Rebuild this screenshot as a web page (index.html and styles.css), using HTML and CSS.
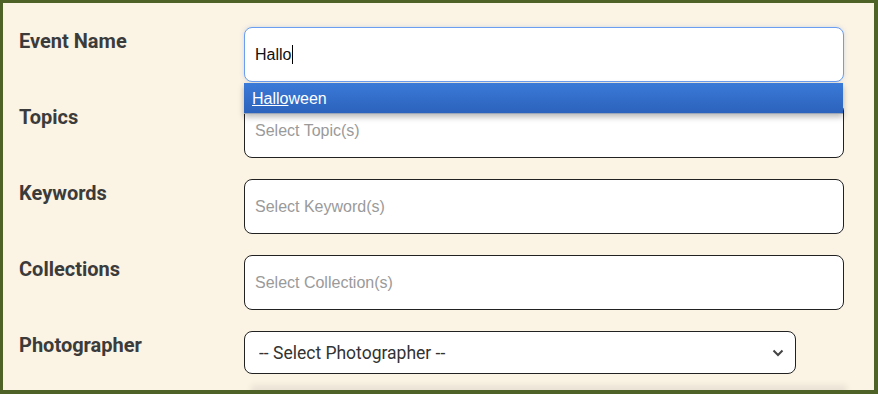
FILE: index.html
```html
<!DOCTYPE html>
<html lang="en">
<head>
    <meta charset="UTF-8">
    <meta name="viewport" content="width=device-width, initial-scale=1.0">
    <title>Event Details</title>
    <link rel="stylesheet" href="styles.css">
</head>
<body>
    <div class="frame">
        <form class="formulario" action="#">
            <div class="linha">
                <label class="rotulo">Event Name</label>
                <div class="campo">
                    <div class="entrada foco">Hallo<span class="cursor"></span></div>
                    <ul class="sugestoes">
                        <li class="ativa"><u>Hallo</u>ween</li>
                    </ul>
                </div>
            </div>
            <div class="linha">
                <label class="rotulo">Topics</label>
                <div class="campo">
                    <input type="text" class="entrada" placeholder="Select Topic(s)">
                </div>
            </div>
            <div class="linha">
                <label class="rotulo">Keywords</label>
                <div class="campo">
                    <input type="text" class="entrada" placeholder="Select Keyword(s)">
                </div>
            </div>
            <div class="linha">
                <label class="rotulo">Collections</label>
                <div class="campo">
                    <input type="text" class="entrada" placeholder="Select Collection(s)">
                </div>
            </div>
            <div class="linha">
                <label class="rotulo">Photographer</label>
                <div class="campo">
                    <div class="selecao">
                        <select>
                            <option>-- Select Photographer --</option>
                        </select>
                        <svg class="seta" width="12" height="8" viewBox="0 0 12 8">
                            <path d="M1.5 1.5 L6 6 L10.5 1.5" fill="none" stroke="#444" stroke-width="2"/>
                        </svg>
                    </div>
                </div>
            </div>
            <div class="proximo"></div>
        </form>
    </div>
</body>
</html>
```

FILE: styles.css
```css
* {
    padding: 0;
    margin: 0;
    box-sizing: border-box;
}

body {
    background: #4e6126;
}

/* Moldura */
.frame {
    width: 878px;
    height: 394px;
    background: #fbf3e4;
    border: solid #4e6126;
    border-width: 3px 4px 4px 3px;
    overflow: hidden;
}

.formulario {
    padding: 24px 30px 0 16px;
    display: flex;
    flex-direction: column;
    gap: 21px;
}

.linha {
    display: flex;
}

.rotulo {
    width: 225px;
    flex: none;
    padding-top: 2px;
    font-family: Roboto, 'Liberation Sans', Arial, sans-serif;
    font-weight: bold;
    font-size: 20px;
    line-height: 24px;
    color: #3b3b3b;
}

.campo {
    position: relative;
    flex: 1;
}

/* Campos de texto */
.entrada {
    display: flex;
    align-items: center;
    width: 600px;
    height: 55px;
    padding: 0 10px;
    font-family: 'Liberation Sans', Arial, sans-serif;
    font-size: 16px;
    color: #111;
    background: #fff;
    border: 1px solid #222;
    border-radius: 8px;
    outline: none;
}

.entrada::placeholder {
    color: #9a9a9a;
}

.foco {
    border-color: #6b9df0;
    box-shadow: 0 0 4px rgba(120, 160, 230, .35);
}

.cursor {
    display: inline-block;
    width: 1px;
    height: 19px;
    margin-left: 1px;
    background: #000;
}

/* Sugestoes */
.sugestoes {
    position: absolute;
    top: 56px;
    left: 0;
    width: 599px;
    list-style: none;
    z-index: 10;
    box-shadow: 0 3px 6px rgba(0, 0, 0, .28);
}

.sugestoes li {
    height: 31px;
    padding-left: 8px;
    line-height: 31px;
    font-family: 'Liberation Sans', Arial, sans-serif;
    font-size: 16px;
    color: #fff;
    background: linear-gradient(#3b7ad8, #2b62bc);
    border-bottom: 1px solid #9aa6b8;
}

/* Select */
.selecao {
    position: relative;
    width: 552px;
}

.selecao select {
    appearance: none;
    width: 100%;
    height: 43px;
    padding: 0 14px;
    font-family: Roboto, 'Liberation Sans', Arial, sans-serif;
    font-size: 17.5px;
    color: #333;
    background: #fff;
    border: 1px solid #222;
    border-radius: 8px;
}

.seta {
    position: absolute;
    right: 12px;
    top: 18px;
}

/* Proximo campo, cortado */
.proximo {
    width: 596px;
    height: 20px;
    margin: -5px 0 0 232px;
    border-top: 1px solid #333;
    box-shadow: 0 -5px 6px rgba(0, 0, 0, .07);
}
```
